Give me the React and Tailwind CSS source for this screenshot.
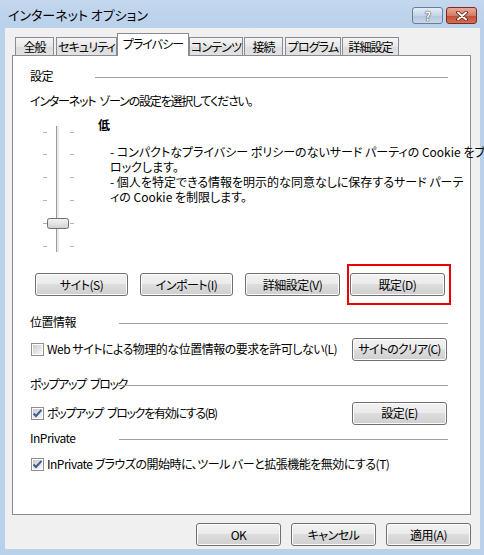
import { useState } from "react";

const btn =
  "flex h-[23px] items-center justify-center whitespace-nowrap rounded-[3px] border border-[#707070] bg-[linear-gradient(to_bottom,#f2f2f2_0%,#ebebeb_48%,#dddddd_50%,#cfcfcf_100%)] shadow-[inset_0_0_0_1px_#fcfcfc] text-[12px] leading-none text-black";

const tabs = [
  { label: "全般", w: "w-[39px]", ml: "ml-[2px]" },
  { label: "セキュリティ", w: "w-[61px]", ml: "ml-[2px]" },
  { label: "プライバシー", w: "w-[72px]", ml: "ml-0", active: true },
  { label: "コンテンツ", w: "w-[54px]", ml: "ml-0" },
  { label: "接続", w: "w-[39px]", ml: "ml-[1px]" },
  { label: "プログラム", w: "w-[56px]", ml: "ml-[2px]" },
  { label: "詳細設定", w: "w-[57px]", ml: "ml-[1px]" },
];

function Checkbox({ checked }) {
  return (
    <span className="flex h-[13px] w-[13px] shrink-0 items-center justify-center border border-[#8f8f8f] bg-white">
      <span className="relative flex h-[9px] w-[9px] items-center justify-center bg-[linear-gradient(135deg,#cbcbcb,#f7f7f7)]">
        {checked && (
          <svg width="11" height="11" viewBox="0 0 11 11" className="absolute">
            <path d="M1.5 5.5 L4 8 L9.5 1.8" fill="none" stroke="#3d5b97" strokeWidth="2" />
          </svg>
        )}
      </span>
    </span>
  );
}

function Slider() {
  const ticks = [14, 36, 59, 82, 105, 128];
  return (
    <svg width="68" height="136" viewBox="0 0 68 136" className="shrink-0">
      {ticks.map((y) => (
        <g key={y}>
          <rect x="13" y={y} width="4" height="1" fill="#b4b4b4" />
          <rect x="40" y={y} width="4" height="1" fill="#b4b4b4" />
        </g>
      ))}
      <rect x="26" y="8" width="4" height="126" fill="#e7eaea" />
      <rect x="26" y="8" width="1" height="126" fill="#9a9a9a" />
      <rect x="29" y="8" width="1" height="126" fill="#ffffff" />
      <rect x="17.5" y="100.5" width="21" height="10" rx="2" fill="url(#thumb)" stroke="#707070" />
      <defs>
        <linearGradient id="thumb" x1="0" y1="0" x2="0" y2="1">
          <stop offset="0" stopColor="#f4f4f4" />
          <stop offset="0.5" stopColor="#e4e4e4" />
          <stop offset="1" stopColor="#cfcfcf" />
        </linearGradient>
      </defs>
    </svg>
  );
}

function Group({ children, w }) {
  return (
    <div className="flex h-[16px] items-center">
      <span className={`${w} shrink-0 whitespace-nowrap`}>{children}</span>
      <div className="mt-[2px] h-px flex-1 bg-[#a0a0a0]" />
    </div>
  );
}

export default function App() {
  const [active] = useState("プライバシー");

  return (
    <div className="flex h-[555px] w-[484px] flex-col bg-[#b9d1ea] font-['Noto_Sans_CJK_JP','Noto_Sans',sans-serif] text-[12px] leading-[16px] tracking-[-0.5px] text-black [font-feature-settings:'palt']">
      {/* title bar */}
      <div className="flex h-[28px] shrink-0 items-start bg-[linear-gradient(to_bottom,#c3d7ee,#b9d1ea)] pl-[8px] pr-[7px]">
        <span className="mt-[6px] text-[13px] leading-[18px] tracking-normal">インターネット オプション</span>
        <div className="ml-auto mt-[7px] flex gap-[3px]">
          <div className="flex h-[17px] w-[31px] items-center justify-center rounded-[3px] border border-[#6d7e93] bg-[linear-gradient(to_bottom,#e4edf7,#c4d4e7_50%,#b3c6de_51%,#c9d8ea)] text-[12px] font-bold leading-none text-white [text-shadow:0_0_1px_#3c4a5e,0_0_1px_#3c4a5e,0_0_1px_#3c4a5e]">
            ?
          </div>
          <div className="flex h-[17px] w-[31px] items-center justify-center rounded-[3px] border border-[#7d2a1f] bg-[linear-gradient(to_bottom,#e9a998,#d47a66_50%,#c34c33_51%,#d46f56)]">
            <svg width="14" height="10" viewBox="0 0 14 10">
              <path d="M3 1.5 L11 8.5 M11 1.5 L3 8.5" stroke="#5a1d12" strokeWidth="3.6" strokeLinecap="round" />
              <path d="M3 1.5 L11 8.5 M11 1.5 L3 8.5" stroke="#ffffff" strokeWidth="2" strokeLinecap="round" />
            </svg>
          </div>
        </div>
      </div>

      {/* client area */}
      <div className="mb-[6px] ml-[5px] mr-[4px] flex flex-1 flex-col bg-[#f0f0f0] pl-[7px] pr-[9px]">
        {/* tabs */}
        <div className="flex h-[27px] shrink-0 items-end pl-[1px]">
          {tabs.map((t) =>
            t.label === active ? (
              <div
                key={t.label}
                className={`relative z-10 -mb-px flex h-[23px] ${t.w} ${t.ml} items-start justify-center whitespace-nowrap border border-b-0 border-[#898c95] bg-white pt-[2px] tracking-[-0.9px]`}
              >
                {t.label}
              </div>
            ) : (
              <div
                key={t.label}
                className={`flex h-[18px] ${t.w} ${t.ml} items-center justify-center whitespace-nowrap border border-b-0 border-[#898c95] bg-[linear-gradient(to_bottom,#f5f5f5,#e8e8e8_50%,#dcdcdc_51%,#e2e2e2)] tracking-[-0.9px]`}
              >
                {t.label}
              </div>
            )
          )}
        </div>

        {/* panel */}
        <div className="flex h-[460px] shrink-0 flex-col border border-[#898c95] bg-white pl-[17px] pr-[22px]">
          <div className="mt-[12px]">
            <Group w="w-[65px]">設定</Group>
          </div>
          <div className="mt-[9px] flex h-[16px] whitespace-nowrap tracking-[-1.2px]">
            <span>インターネット</span>
            <span className="ml-[4px]">ゾーンの設定を選択してください。</span>
          </div>

          <div className="mt-[9px] flex h-[136px]">
            <Slider />
            <div className="flex flex-col">
              <div className="-mt-px h-[16px] font-bold">低</div>
              <div className="mt-[11px] whitespace-nowrap pl-[12px] tracking-normal">
                <div className="h-[15px] leading-[15px]">- コンパクトなプライバシー ポリシーのないサード パーティの Cookie をブ</div>
                <div className="h-[15px] leading-[15px]">ロックします。</div>
                <div className="h-[15px] leading-[15px]">- 個人を特定できる情報を明示的な同意なしに保存するサード パーテ</div>
                <div className="h-[15px] leading-[15px]">ィの Cookie を制限します。</div>
              </div>
            </div>
          </div>

          <div className="mt-[19px] flex pl-[5px]">
            <button className={`${btn} w-[93px]`}>サイト(S)</button>
            <button className={`${btn} ml-[12px] w-[93px]`}>インポート(I)</button>
            <button className={`${btn} ml-[12px] w-[95px]`}>詳細設定(V)</button>
            <div className="relative ml-[10px]">
              <button className={`${btn} w-[95px]`}>既定(D)</button>
              <div className="pointer-events-none absolute -bottom-[9px] -left-[3px] -right-[6px] -top-[9px] border-2 border-[#ee0000]" />
            </div>
          </div>

          <div className="mt-[18px]">
            <Group w="w-[89px]">位置情報</Group>
          </div>
          <div className="mt-[7px] flex h-[24px] items-center">
            <span className="ml-px">
              <Checkbox />
            </span>
            <span className="ml-[3px] whitespace-nowrap">Web サイトによる物理的な位置情報の要求を許可しない(L)</span>
            <button className={`${btn} ml-auto mr-px w-[95px] tracking-[-0.8px]`}>サイトのクリア(C)</button>
          </div>

          <div className="mt-[15px]">
            <Group w="w-[88px]">
              <span className="tracking-[-1.3px]">ポップアップ</span>
              <span className="ml-[4px] tracking-[-1.3px]">ブロック</span>
            </Group>
          </div>
          <div className="mt-[9px] flex h-[24px] items-center">
            <span className="ml-px">
              <Checkbox checked />
            </span>
            <span className="ml-[3px] whitespace-nowrap tracking-[-1.3px]">
              ポップアップ<span className="ml-[4px]">ブロックを有効にする(B)</span>
            </span>
            <button className={`${btn} ml-auto mr-px w-[95px]`}>設定(E)</button>
          </div>

          <div className="mt-[5px]">
            <Group w="w-[89px]">InPrivate</Group>
          </div>
          <div className="mt-[10px] flex h-[16px] items-center">
            <span className="ml-px">
              <Checkbox checked />
            </span>
            <span className="ml-[3px] whitespace-nowrap">InPrivate ブラウズの開始時に、ツール バーと拡張機能を無効にする(T)</span>
          </div>
        </div>

        {/* dialog buttons */}
        <div className="mt-[8px] flex justify-end gap-[10px]">
          <button className={`${btn} w-[85px] border-[#3c7fb1] shadow-[inset_0_0_0_1px_#b9e3f8]`}>OK</button>
          <button className={`${btn} w-[85px]`}>キャンセル</button>
          <button className={`${btn} w-[85px]`}>適用(A)</button>
        </div>
      </div>
    </div>
  );
}
